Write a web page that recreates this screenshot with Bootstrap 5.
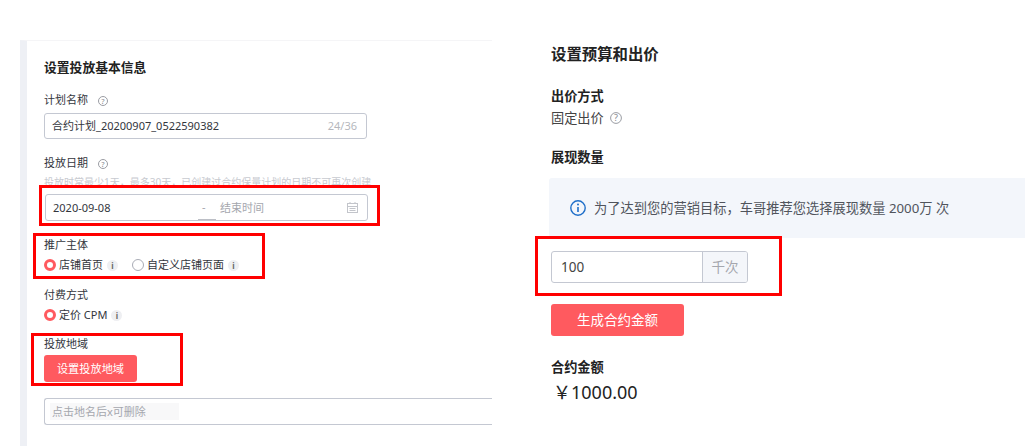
<!DOCTYPE html>
<html lang="zh"><head><meta charset="utf-8"><title>设置投放</title>
<link href="https://cdn.jsdelivr.net/npm/bootstrap@5.3.0/dist/css/bootstrap.min.css" rel="stylesheet">
<style>
html,body{height:446px;overflow:hidden;background:#fff}
body{font-family:"Noto Sans","Noto Sans CJK SC",sans-serif;font-size:11px;color:#33363d;line-height:20px;position:relative}
.stage{height:446px}
.left-col{width:472px;margin-left:20px;margin-top:40px;height:406px;border-left:7px solid #eef0f5;border-top:1px solid #f5f5f7;padding-left:17px;overflow:hidden;flex:none}
.right-col{margin-left:59px;flex:1;min-width:0;padding-top:45px}
.h-title{font-size:12.8px;font-weight:700;color:#222;line-height:20px;margin:16px 0 13px}
.lab{line-height:20px;height:20px}
.qm{display:inline-block;vertical-align:-2px;margin-left:10px}
.fbox{border:1px solid #c4c8d2;border-radius:3px;height:27px;display:flex;align-items:center;padding:0 9px 0 7px;background:#fff}
.w-name{width:323px;height:26px;margin-top:3px}
.w-date{width:323px;margin-left:1px;margin-top:5px}
.count{margin-left:auto;color:#b5b7bd}
.hint{color:#c8cad0;font-size:10px;line-height:14px;height:14px;white-space:nowrap;margin-top:2px}
.muted-t{color:#a5a7ae}
.dash-cell{width:18px;margin-left:-4px;margin-right:4px;align-self:stretch;border-bottom:1px solid #bcbfc6;padding-left:4px}
.rd{width:12px;height:12px;border-radius:50%;display:inline-block;flex:none}
.rd-on{border:3.5px solid #ff5a5f;background:#fff}
.rd-off{border:1px solid #a9acb6;background:#fff}
.rd-txt{margin-left:3px}
.dot{width:11px;height:11px;border-radius:50%;background:#eeeff2;color:#666;font-size:8px;line-height:11px;text-align:center;display:inline-block;flex:none;font-weight:700;margin-left:4px}
.rrow{height:20px}
.btn-coral{background:#ff5a5f;color:#fff;border:0;border-radius:3px;padding:0;display:block;text-align:center}
.btn-a{width:93px;height:27px;font-size:11.2px;margin-top:1px}
.btn-b{width:133px;height:32px;font-size:13.5px}
.ph-tag{background:#f8f8f9;color:#a5a7ae;width:129px;margin-left:-2px;padding-left:2px;height:17px;line-height:17px}
.area{width:460px;border-right:0;border-radius:3px 0 0 3px}
.r-title{font-size:15.4px;font-weight:700;color:#222;line-height:20px}
.r-lab{font-size:13.2px;font-weight:700;color:#222;line-height:20px}
.r-val{font-size:13.2px;line-height:20px;color:#444}
.tip{margin-left:-2px;width:476px;height:60px;background:#f3f6fb;border-radius:3px 0 0 3px;padding-left:21px;font-size:13.25px;color:#50545c;white-space:nowrap}
.numgrp{width:197px;height:32px;border:1px solid #c4c8d2;border-radius:3px;overflow:hidden;font-size:13.5px}
.num-in{padding-left:9px;color:#444}
.num-add{width:45px;background:#f4f6fa;border-left:1px solid #c4c8d2;color:#a5a7ae;text-align:center}
.price{font-size:18px;line-height:24px;color:#222;margin-left:2px}
.anno{position:absolute;border:3px solid #f00;pointer-events:none}
.a1{left:39px;top:185px;width:341px;height:41px}
.a2{left:33px;top:233px;width:232px;height:46px}
.a3{left:31px;top:333px;width:152px;height:53px}
.a4{left:535px;top:236px;width:247px;height:60px}
</style></head>
<body>
<div class="stage d-flex">
  <div class="left-col">
    <div class="h-title">设置投放基本信息</div>
    <div class="lab">计划名称<svg class="qm" width="10" height="10" viewBox="0 0 10 10"><circle cx="5" cy="5" r="4.5" fill="none" stroke="#9a9ca3"/><text x="5" y="7.6" text-anchor="middle" font-size="7.5" fill="#85878e">?</text></svg></div>
    <div class="fbox w-name"><span>合约计划_20200907_0522590382</span><span class="count">24/36</span></div>
    <div class="lab" style="margin-top:14px">投放日期<svg class="qm" width="10" height="10" viewBox="0 0 10 10"><circle cx="5" cy="5" r="4.5" fill="none" stroke="#9a9ca3"/><text x="5" y="7.6" text-anchor="middle" font-size="7.5" fill="#85878e">?</text></svg></div>
    <div class="hint">投放时常最少1天，最多30天，已创建过合约保量计划的日期不可再次创建</div>
    <div class="fbox w-date">
      <span style="width:149px">2020-09-08</span><span class="muted-t dash-cell d-flex align-items-center">-</span><span class="muted-t">结束时间</span>
      <svg class="ms-auto" width="11" height="11" viewBox="0 0 11 11"><rect x=".5" y="1.5" width="10" height="9" fill="none" stroke="#c3c5cb"/><path d="M.5 4.5h10M3 0v2M8 0v2M2.5 6.5h6M2.5 8.5h6" stroke="#c3c5cb" fill="none"/></svg>
    </div>
    <div class="lab" style="margin-top:14px">推广主体</div>
    <div class="d-flex align-items-center rrow">
      <span class="rd rd-on"></span><span class="rd-txt">店铺首页</span><span class="dot">i</span>
      <span class="rd rd-off" style="margin-left:14px"></span><span class="rd-txt">自定义店铺页面</span><span class="dot">i</span>
    </div>
    <div class="lab" style="margin-top:10px">付费方式</div>
    <div class="d-flex align-items-center rrow">
      <span class="rd rd-on"></span><span class="rd-txt">定价 CPM</span><span class="dot">i</span>
    </div>
    <div class="lab" style="margin-top:9px">投放地域</div>
    <button class="btn-coral btn-a" type="button">设置投放地域</button>
    <div class="fbox area" style="margin-top:16px"><span class="ph-tag">点击地名后x可删除</span></div>
  </div>
  <div class="right-col">
    <div class="r-title">设置预算和出价</div>
    <div class="r-lab" style="margin-top:21px">出价方式</div>
    <div class="r-val d-flex align-items-center" style="margin-top:2px">固定出价<svg style="margin-left:6px" width="12" height="12" viewBox="0 0 12 12"><circle cx="6" cy="6" r="5.4" fill="none" stroke="#9a9ca3"/><text x="6" y="9" text-anchor="middle" font-size="9" fill="#85878e">?</text></svg></div>
    <div class="r-lab" style="margin-top:19px">展现数量</div>
    <div class="tip d-flex align-items-center" style="margin-top:11px">
      <svg width="16" height="16" viewBox="0 0 16 16" class="flex-none"><circle cx="8" cy="8" r="7.2" fill="none" stroke="#1f6fc9" stroke-width="1.4"/><circle cx="8" cy="4.6" r="1" fill="#1f6fc9"/><path d="M8 7v5" stroke="#1f6fc9" stroke-width="1.6"/></svg>
      <span class="ms-2">为了达到您的营销目标，车哥推荐您选择展现数量 2000万 次</span>
    </div>
    <div class="numgrp d-flex align-items-center" style="margin-top:13px"><span class="num-in flex-grow-1">100</span><span class="num-add h-100 d-flex align-items-center justify-content-center">千次</span></div>
    <button class="btn-coral btn-b" type="button" style="margin-top:21px">生成合约金额</button>
    <div class="r-lab" style="margin-top:21px">合约金额</div>
    <div class="price" style="margin-top:3px">￥1000.00</div>
  </div>
</div>
<div class="anno a1"></div><div class="anno a2"></div><div class="anno a3"></div><div class="anno a4"></div>
</body></html>
